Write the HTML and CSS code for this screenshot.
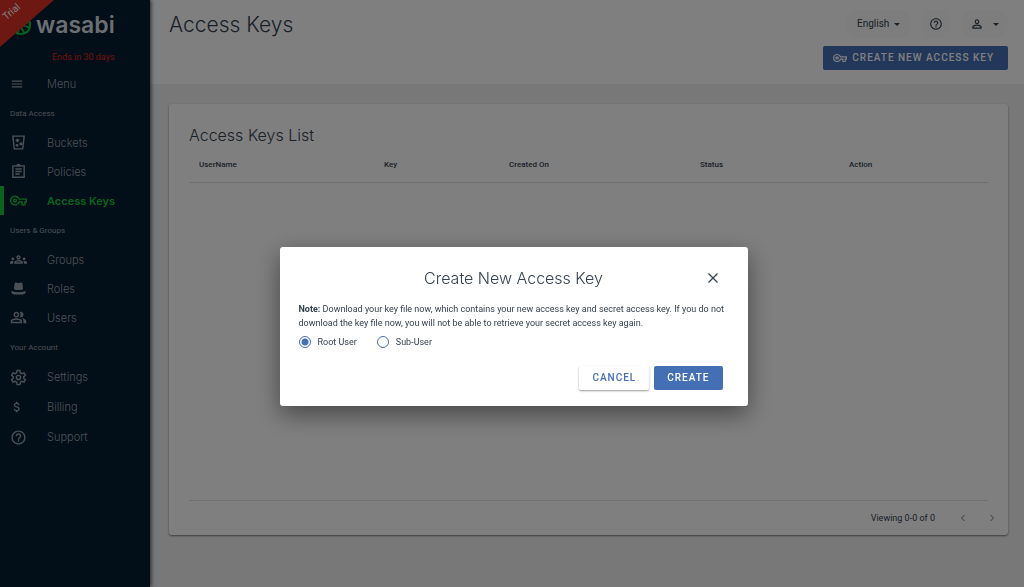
FILE: index.html
```html
<!DOCTYPE html>
<html lang="en">
<head>
<meta charset="utf-8">
<meta name="viewport" content="width=device-width, initial-scale=1">
<title>Access Keys</title>
<link rel="stylesheet" href="styles.css">
</head>
<body>
<svg class="defs" aria-hidden="true">
  <symbol id="key" viewBox="0 0 24 24"><path d="M22 19h-6v-4h-2.68c-1.14 2.42-3.6 4-6.32 4-3.86 0-7-3.14-7-7s3.14-7 7-7c2.72 0 5.17 1.58 6.32 4H24v6h-2v4zm-4-2h2v-4h2v-2H11.94l-.23-.67C11.01 8.34 9.11 7 7 7c-2.76 0-5 2.24-5 5s2.24 5 5 5c2.11 0 4.01-1.34 4.71-3.33l.23-.67H18v4zM7 15c-1.65 0-3-1.35-3-3s1.35-3 3-3 3 1.35 3 3-1.35 3-3 3zm0-4c-.55 0-1 .45-1 1s.45 1 1 1 1-.45 1-1-.45-1-1-1z"/></symbol>
  <symbol id="help" viewBox="0 0 24 24"><path d="M11 18h2v-2h-2v2zm1-16C6.480 2 2 6.480 2 12s4.480 10 10 10 10-4.480 10-10S17.520 2 12 2zm0 18c-4.410 0-8-3.590-8-8s3.590-8 8-8 8 3.590 8 8-3.590 8-8 8zm0-14c-2.210 0-4 1.790-4 4h2c0-1.100.900-2 2-2s2 .900 2 2c0 2-3 1.750-3 5h2c0-2.250 3-2.500 3-5 0-2.210-1.790-4-4-4z"/></symbol>
</svg>
<div class="app">
  <aside class="sidebar">
    <div class="brand">
      <svg class="brand-mark" viewBox="0 0 24 24" aria-hidden="true"><circle cx="12" cy="12" r="10"/><path d="M2 17 22 8M11 13l5 8M11 13l-3 9M13 12l9 3M5 4l8 8"/></svg>
      <span class="brand-name">wasabi</span>
    </div>
    <div class="ribbon"><span class="ribbon-text">Trial</span></div>
    <p class="trial-note">Ends in 30 days</p>
    <nav class="nav">
      <button class="nav-item" type="button"><svg class="icon icon-small" viewBox="0 0 24 24"><path d="M3 18h18v-2H3zm0-5h18v-2H3zm0-7v2h18V6z"/></svg>Menu</button>
      <h2 class="nav-label">Data Access</h2>
      <a class="nav-item" href="#"><svg class="icon" viewBox="0 0 24 24"><path class="line" d="M4 3h16l-2 18H6z"/><circle cx="10" cy="16" r="2"/><path d="m10.500 6 3 3-3 3-3-3zM13.500 12h4v4h-4z"/></svg>Buckets</a>
      <a class="nav-item" href="#"><svg class="icon" viewBox="0 0 24 24"><path class="line" d="M4 4h16v16H4zM7.500 8.500h9M7.500 12h9M7.500 15.500h6"/><path d="M9 4a3 3 0 0 1 6 0v1H9z"/></svg>Policies</a>
      <a class="nav-item active" href="#" aria-current="page"><svg class="icon"><use href="#key"/></svg>Access Keys</a>
      <h2 class="nav-label">Users &amp; Groups</h2>
      <a class="nav-item" href="#"><svg class="icon" viewBox="0 0 24 24"><path d="M4 13c1.100 0 2-.9 2-2s-.9-2-2-2-2 .9-2 2 .9 2 2 2zm1.130 1.100c-.37-.06-.74-.1-1.130-.1-.99 0-1.930.21-2.780.58C.48 14.900 0 15.620 0 16.430V18h4.500v-1.610c0-.83.23-1.610.63-2.290zM20 13c1.100 0 2-.9 2-2s-.9-2-2-2-2 .9-2 2 .9 2 2 2zm4 3.430c0-.81-.48-1.530-1.220-1.850-.85-.37-1.790-.58-2.780-.58-.39 0-.76.04-1.130.1.4.68.63 1.460.63 2.290V18H24v-1.570zm-7.760-2.780c-1.170-.52-2.610-.9-4.240-.9s-3.070.39-4.240.9C6.680 14.130 6 15.210 6 16.390V18h12v-1.610c0-1.180-.68-2.260-1.760-2.740zM8.070 16c.09-.23.13-.39.91-.69.97-.38 1.990-.56 3.020-.56s2.050.18 3.020.56c.77.3.81.46.91.69H8.070zM12 8c.55 0 1 .45 1 1s-.45 1-1 1-1-.45-1-1 .45-1 1-1m0-2c-1.660 0-3 1.340-3 3s1.340 3 3 3 3-1.340 3-3-1.340-3-3-3z"/></svg>Groups</a>
      <a class="nav-item" href="#"><svg class="icon" viewBox="0 0 24 24"><path d="M5.500 13 6.500 5q.3-2 2.500-1.500l3 1 3-1q2.200-.5 2.500 1.500l1 8q-6.500 2.500-13 0zM2 15.500q10 3.500 20 0v2.500q-1 2.500-4 2.500H6q-3 0-4-2.500z"/></svg>Roles</a>
      <a class="nav-item" href="#"><svg class="icon" viewBox="0 0 24 24"><path d="M16.670 13.130C18.040 14.060 19 15.320 19 17v3h4v-3c0-2.180-3.570-3.470-6.330-3.870zM15 12c2.210 0 4-1.790 4-4s-1.790-4-4-4c-.47 0-.91.1-1.330.24C14.500 5.270 15 6.580 15 8s-.5 2.730-1.330 3.760c.42.14.86.24 1.330.24zM9 12c2.210 0 4-1.790 4-4s-1.790-4-4-4-4 1.790-4 4 1.790 4 4 4zm0-6c1.100 0 2 .9 2 2s-.9 2-2 2-2-.9-2-2 .9-2 2-2zm0 7c-2.670 0-8 1.340-8 4v3h16v-3c0-2.660-5.330-4-8-4zm6 5H3v-.99C3.200 16.290 6.300 15 9 15s5.800 1.290 6 2v1z"/></svg>Users</a>
      <h2 class="nav-label">Your Account</h2>
      <div class="account">
        <a class="nav-item" href="#"><svg class="icon" viewBox="0 0 24 24"><path class="line" d="m10 2-.6 3.300-2.100 1.200L4.200 5.400l-2 3.500 2.500 2.100v2l-2.500 2.100 2 3.500 3.100-1.100 2.100 1.200L10 22h4l.6-3.300 2.100-1.200 3.100 1.100 2-3.500-2.500-2.100v-2l2.500-2.100-2-3.500-3.100 1.100-2.100-1.200L14 2z"/><circle class="line" cx="12" cy="12" r="3"/></svg>Settings</a>
        <a class="nav-item" href="#"><svg class="icon icon-small" viewBox="0 0 24 24"><path d="M11.800 10.900c-2.270-.59-3-1.200-3-2.150 0-1.090 1.010-1.850 2.700-1.850 1.780 0 2.440.85 2.500 2.100h2.210c-.07-1.720-1.120-3.300-3.210-3.810V3h-3v2.160c-1.940.42-3.500 1.680-3.500 3.610 0 2.310 1.910 3.460 4.700 4.130 2.500.6 3 1.480 3 2.410 0 .69-.49 1.790-2.700 1.790-2.060 0-2.870-.92-2.980-2.100h-2.200c.12 2.190 1.760 3.420 3.680 3.830V21h3v-2.150c1.950-.37 3.500-1.500 3.500-3.550 0-2.840-2.430-3.810-4.700-4.400z"/></svg>Billing</a>
        <a class="nav-item" href="#"><svg class="icon"><use href="#help"/></svg>Support</a>
      </div>
    </nav>
  </aside>
  <main class="main">
    <header class="header">
      <h1 class="page-title">Access Keys</h1>
      <div class="header-side">
        <div class="tools">
          <div class="pill language"><select class="language-select" aria-label="Language"><option>English</option></select><span class="caret"></span></div>
          <button class="pill round" type="button" aria-label="Help"><svg class="tool-icon"><use href="#help"/></svg></button>
          <button class="pill profile" type="button" aria-label="Profile"><svg class="tool-icon" viewBox="0 0 24 24"><path d="M12 5.900c1.160 0 2.100.94 2.100 2.100s-.94 2.100-2.100 2.100S9.900 9.160 9.900 8s.94-2.100 2.100-2.100m0 9c2.970 0 6.100 1.460 6.100 2.100v1.100H5.900V17c0-.64 3.130-2.100 6.100-2.100M12 4C9.790 4 8 5.790 8 8s1.790 4 4 4 4-1.790 4-4-1.790-4-4-4zm0 9c-2.670 0-8 1.340-8 4v3h16v-3c0-2.660-5.330-4-8-4z"/></svg><span class="caret"></span></button>
        </div>
        <button class="button primary" type="button"><svg class="tool-icon"><use href="#key"/></svg>CREATE NEW ACCESS KEY</button>
      </div>
    </header>
    <section class="card">
      <h2 class="card-title">Access Keys List</h2>
      <div class="card-body">
        <table class="keys">
          <colgroup><col class="col-user"><col class="col-key"><col class="col-created"><col class="col-status"><col></colgroup>
          <thead><tr><th>UserName</th><th>Key</th><th>Created On</th><th>Status</th><th>Action</th></tr></thead>
        </table>
      </div>
      <footer class="pager">
        <span>Viewing 0-0 of 0</span>
        <div class="page-buttons">
          <button class="page-button" type="button" aria-label="Previous page" disabled><svg viewBox="0 0 12 12"><path d="M7.500 3 4.500 6l3 3"/></svg></button>
          <button class="page-button" type="button" aria-label="Next page" disabled><svg viewBox="0 0 12 12"><path d="m4.500 3 3 3-3 3"/></svg></button>
        </div>
      </footer>
    </section>
  </main>
</div>
<div class="backdrop">
  <form class="dialog" role="dialog" aria-modal="true" aria-labelledby="dialog-title">
    <div class="dialog-head">
      <h2 class="dialog-title" id="dialog-title">Create New Access Key</h2>
      <button class="close" type="button" aria-label="Close"><svg viewBox="0 0 12 12"><path d="m1.500 1.500 9 9m0-9-9 9"/></svg></button>
    </div>
    <p class="note"><strong>Note:</strong> Download your key file now, which contains your new access key and secret access key. If you do not download the key file now, you will not be able to retrieve your secret access key again.</p>
    <div class="choices">
      <label class="choice"><input class="radio" type="radio" name="user" checked>Root User</label>
      <label class="choice"><input class="radio" type="radio" name="user">Sub-User</label>
    </div>
    <div class="actions">
      <button class="button plain" type="button">CANCEL</button>
      <button class="button primary" type="submit">CREATE</button>
    </div>
  </form>
</div>
</body>
</html>
```
FILE: styles.css
```css
* { box-sizing: border-box; }
body { margin: 0; font: 9px/14px Roboto, sans-serif; color: #35414f; background: #f0f0f0; }
h1, h2, p { margin: 0; font-weight: 400; }
button { border: 0; padding: 0; font: inherit; color: inherit; background: none; }
svg { fill: currentColor; flex: none; }
.defs { position: absolute; width: 0; height: 0; }

.app { display: flex; min-height: 100vh; }
.sidebar { position: relative; flex: 0 0 150px; background: #041c30; color: #98a1ac; box-shadow: 1px 0 4px rgba(0, 0, 0, .7); }
.ribbon { position: absolute; top: 0; left: 0; width: 54px; height: 47px; background: #da3027; clip-path: polygon(0 0, 100% 0, 0 100%); }
.ribbon-text { position: absolute; top: 5px; left: 2px; font-size: 10px; color: #fff; transform: rotate(-41deg); }
.brand { display: flex; align-items: center; gap: 4px; height: 50px; padding-left: 10px; }
.brand-mark { width: 22px; height: 28px; fill: none; stroke: #00ce3e; stroke-width: 2; }
.brand-name { font: 600 23px/28px Inter, sans-serif; color: #d8dde2; }
.trial-note { height: 19px; padding-left: 52px; color: #e2231a; }
.nav { display: flex; flex-direction: column; }
.nav-item { display: flex; align-items: center; gap: 20px; height: 29px; padding-left: 10px; font: 300 11px/16px Inter, sans-serif; color: inherit; text-decoration: none; }
.account .nav-item { height: 30px; }
.nav-label { height: 30px; padding-left: 10px; font-size: 8px; line-height: 32px; }
.icon { width: 17px; height: 17px; }
.icon-small { width: 14px; height: 14px; margin-right: 3px; }
.line { fill: none; stroke: currentColor; stroke-width: 2; }
.active { padding-left: 6px; border-left: 4px solid #17c43f; color: #17c43f; font-weight: 600; }

.main { flex: 1; min-width: 0; }
.header { display: flex; justify-content: space-between; height: 84px; padding: 10px 16px 0 19px; background: #fff; }
.page-title { font: 300 21px/30px Inter, sans-serif; }
.header-side { display: flex; flex-direction: column; align-items: flex-end; gap: 8px; }
.tools { display: flex; gap: 11px; }
.pill { display: flex; align-items: center; justify-content: center; height: 28px; border-radius: 14px; background: #fafafa; }
.language { gap: 4px; padding: 0 11px; }
.language-select { appearance: none; border: 0; padding: 0; background: none; color: inherit; font: 10px/16px Roboto, sans-serif; }
.caret { border: 3px solid transparent; border-top-color: currentColor; border-bottom: 0; }
.round { width: 28px; }
.profile { gap: 9px; width: 47px; }
.tool-icon { width: 14px; height: 14px; }
.button { display: flex; align-items: center; gap: 5px; height: 24px; padding: 0 13px; border-radius: 2px; font: 500 10px/16px Roboto, sans-serif; letter-spacing: 1px; }
.primary { background: #446fb5; color: #fff; }
.header .button { padding: 0 14px 0 10px; }
.plain { color: #446fb5; box-shadow: 0 1px 2px rgba(0, 0, 0, .4); }

.card { display: flex; flex-direction: column; height: calc(100vh - 156px); margin: 20px 16px 52px 19px; padding: 20px 20px 0; border-radius: 3px; background: #fff; box-shadow: 0 1px 2px rgba(0, 0, 0, .5); }
.card-title { font: 300 16px/22px Inter, sans-serif; }
.card-body { flex: 1; border-bottom: 1px solid #e0e0e0; }
.keys { width: 100%; border-collapse: collapse; table-layout: fixed; }
.keys th { height: 36px; padding: 2px 10px 0; border-bottom: 1px solid #e0e0e0; font-size: 8px; font-weight: 500; text-align: left; }
.col-user { width: 185px; }
.col-key { width: 125px; }
.col-created { width: 191px; }
.col-status { width: 149px; }
.pager { display: flex; align-items: center; justify-content: flex-end; gap: 22px; height: 34px; margin-right: -10px; }
.page-buttons { display: flex; gap: 17px; }
.page-button { display: flex; color: #707680; }
.page-button svg, .close svg { width: 12px; height: 12px; fill: none; stroke: currentColor; }

.backdrop { position: fixed; inset: 0; display: flex; align-items: center; justify-content: center; padding: 65px 0 0 3px; background: rgba(0, 0, 0, .5); }
.dialog { width: 468px; padding: 20px 19px 16px; border-radius: 3px; background: #fff; box-shadow: 0 8px 24px rgba(0, 0, 0, .45); }
.dialog-head { display: grid; grid-template-columns: 32px 1fr 32px; align-items: center; margin-bottom: 13px; }
.dialog-title { grid-column: 2; font: 300 16px/22px Inter, sans-serif; text-align: center; }
.close { display: flex; justify-content: center; }
.close svg { stroke-width: 1.3; }
.choices { display: flex; gap: 20px; margin: 5px 0 17px; }
.choice { display: flex; align-items: center; gap: 7px; }
.radio { appearance: none; width: 12px; height: 12px; margin: 0; border: 1px solid #446fb5; border-radius: 50%; }
.radio:checked { background: radial-gradient(circle, #446fb5 3px, transparent 4px); }
.actions { display: flex; justify-content: flex-end; gap: 5px; margin-right: 6px; }
```
